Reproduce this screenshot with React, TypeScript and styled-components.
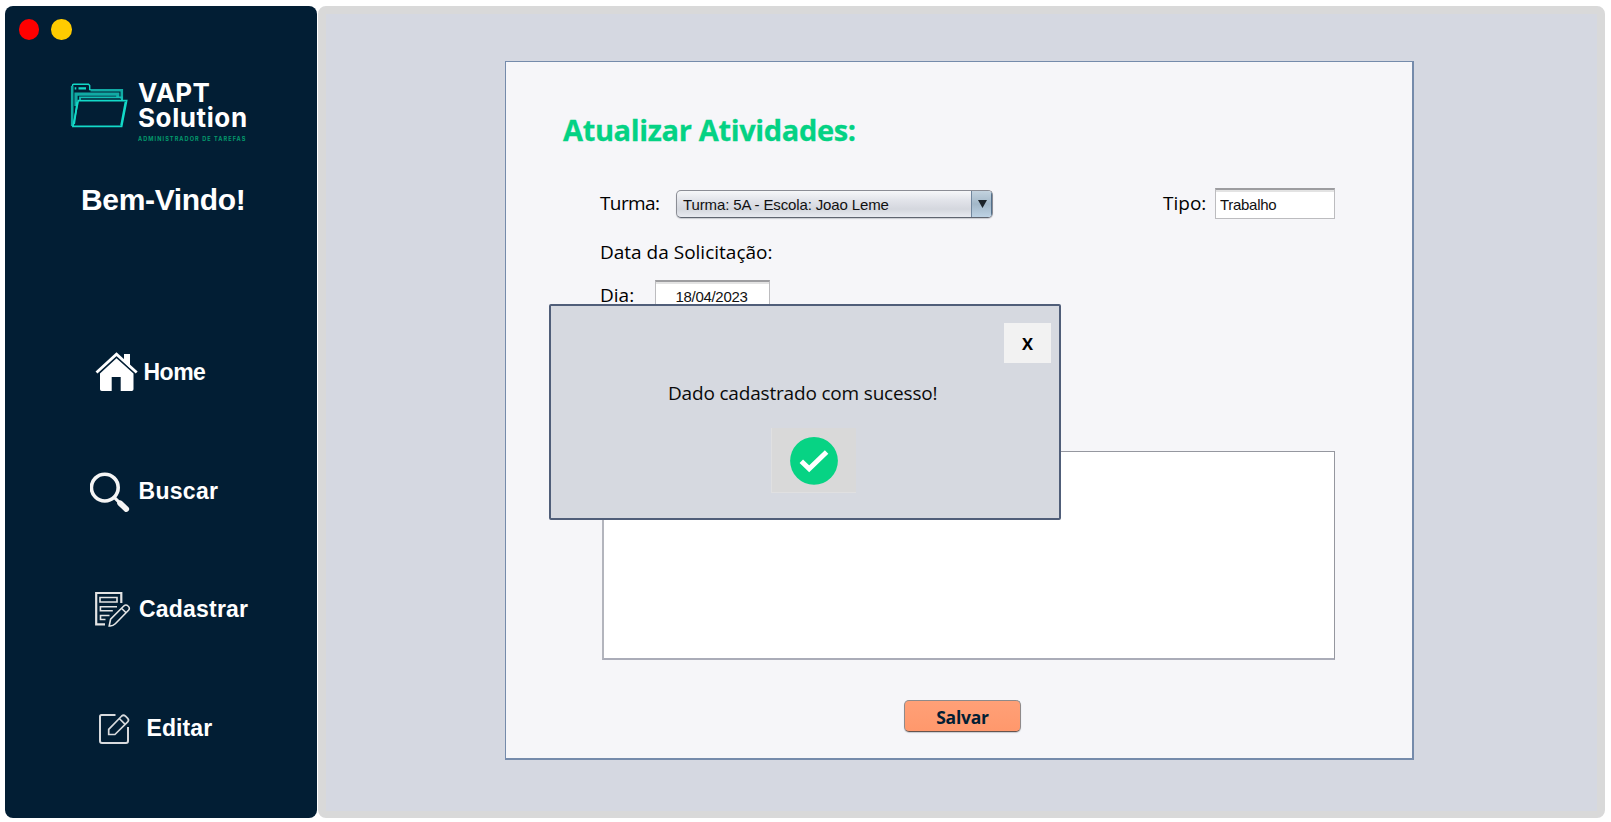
import React from "react";
import styled, { createGlobalStyle } from "styled-components";

const arial = `"Liberation Sans", Arial, sans-serif`;
const segoe = `"Open Sans", "Noto Sans", sans-serif`;

const GlobalStyle = createGlobalStyle`
  * { box-sizing: border-box; }
  body { margin: 0; background: #fff; }
  button, input, textarea { font: inherit; margin: 0; }
`;

const Window = styled.div`
  width: 1611px;
  height: 822px;
  padding: 6px 6px 4px 5px;
  display: flex;
  overflow: hidden;
`;

const Sidebar = styled.aside`
  width: 312px;
  height: 812px;
  flex: none;
  border-radius: 8px;
  background: #021e34;
  color: #fff;
  font-family: ${arial};
  font-weight: 700;
`;

const WindowControls = styled.div`
  display: flex;
  gap: 12px;
  padding: 13px 0 0 13.5px;
  height: 74px;
`;

const Dot = styled.span<{ $color: string }>`
  width: 20.5px;
  height: 20.5px;
  border-radius: 50%;
  background: ${(p) => p.$color};
`;

const Logo = styled.div`
  display: flex;
  height: 68px;
  padding-left: 65px;
`;

const LogoMark = styled.svg`
  width: 60px;
  height: 50px;
  flex: none;
`;

const LogoText = styled.div`
  padding: 1px 0 0 8px;
  font-family: Inter, ${arial};
  font-weight: 650;
  white-space: nowrap;
`;

const LogoName = styled.div<{ $spacing: number }>`
  font-size: 26px;
  line-height: 24.5px;
  letter-spacing: ${(p) => p.$spacing}px;
`;

const LogoTagline = styled.div`
  margin-top: 5px;
  font-size: 5.6px;
  line-height: 8px;
  letter-spacing: 1.05px;
  color: #049a6c;
`;

const Welcome = styled.h1`
  margin: 32px 0 132px 76px;
  font-size: 30px;
  line-height: 40px;
  font-weight: 700;
  letter-spacing: -0.33px;
  white-space: nowrap;
`;

const Nav = styled.nav`
  display: flex;
  flex-direction: column;
  gap: 78.6px;
  padding-left: 85px;
`;

const NavItem = styled.a<{ $spacing: number }>`
  display: flex;
  height: 40px;
  font-size: 23px;
  line-height: 40px;
  letter-spacing: ${(p) => p.$spacing}px;
`;

const NavIcon = styled.svg<{ $width: number }>`
  width: ${(p) => p.$width}px;
  height: 42px;
  flex: none;
`;

const Main = styled.main`
  flex: 1;
  height: 812px;
  margin-left: 1px;
  border: 8px solid #d9d9d9;
  border-bottom-width: 7px;
  border-radius: 8px;
  background: #d5d8e1;
  padding: 47px 0 0 179px;
`;

const Card = styled.section`
  width: 909px;
  height: 699px;
  position: relative;
  border: 1px solid #758bab;
  border-right-width: 2px;
  border-bottom-width: 2px;
  background: #f6f6f9;
  padding: 48px 77px 0 57px;
  font-family: ${segoe};
`;

const Title = styled.h2`
  margin: 0 0 38px;
  font-size: 29px;
  line-height: 40px;
  font-weight: 700;
  letter-spacing: -0.35px;
  color: #04d284;
  -webkit-text-stroke: 0.3px #04d284;
  white-space: nowrap;
`;

const Row = styled.div<{ $gap: number }>`
  display: flex;
  height: 31px;
  padding-left: 37px;
  margin-bottom: ${(p) => p.$gap}px;
`;

const Label = styled.label<{ $width: number; $spacing?: number }>`
  width: ${(p) => p.$width}px;
  flex: none;
  font-size: 19px;
  line-height: 30px;
  font-weight: 500;
  letter-spacing: ${(p) => p.$spacing ?? 0}px;
  color: #000;
  white-space: nowrap;
`;

const Select = styled.div`
  display: flex;
  width: 317px;
  height: 28px;
  margin: 2px 170px 0 0;
  flex: none;
  border: 1px solid #8b8d95;
  border-bottom-color: #5f6570;
  border-radius: 5px;
  box-shadow: 0 1px 1px #c9cbd0;
  overflow: hidden;
  background: linear-gradient(#f6f7f9 0%, #e2e4ea 35%, #d4d7de 70%, #e8eaf0 100%);
`;

const SelectValue = styled.span`
  flex: 1;
  padding-left: 6px;
  font: 15px/28px ${arial};
  letter-spacing: -0.13px;
  color: #111;
  white-space: nowrap;
`;

const SelectArrow = styled.span`
  display: flex;
  width: 21px;
  align-items: center;
  justify-content: center;
  border-left: 1px solid #71879e;
  background: linear-gradient(#c3d3df 0%, #a2b7c8 50%, #bdd2e4 100%);
  box-shadow: inset -1px 0 0 #53708b;
`;

const Field = styled.input<{ $width: number; $align?: string }>`
  width: ${(p) => p.$width}px;
  height: 31px;
  flex: none;
  border: 1px solid #bcbcbf;
  border-top: 2px solid #9d9da0;
  border-radius: 0;
  padding: 1px ${(p) => (p.$align ? 6 : 4)}px 0 4px;
  background: #fff;
  box-shadow: inset 0 2px 0 #e3e3e3;
  font: 15px ${arial};
  letter-spacing: -0.3px;
  text-align: ${(p) => p.$align ?? "left"};
  color: #111;
  outline: none;
`;

const Notes = styled.textarea`
  display: block;
  width: 733px;
  height: 209px;
  margin-left: 39px;
  border: 1px solid #95979f;
  border-left: 2px solid #b3b5bd;
  border-bottom: 2px solid #aaacb8;
  border-radius: 0;
  padding: 4px;
  resize: none;
  background: #fff;
  outline: none;
`;

const SaveButton = styled.button`
  display: block;
  width: 117px;
  height: 32px;
  margin: 40px 0 0 341px;
  padding: 2px 0 0;
  border: 1px solid #8f8a8a;
  border-bottom-color: #66544e;
  border-radius: 5px;
  box-shadow: 0 1px 1px #c9cbd0;
  background: linear-gradient(#ffa077, #ff986c);
  color: #021e34;
  font: 700 17.5px/28px ${segoe};
  letter-spacing: -0.25px;
`;

const Dialog = styled.div`
  position: absolute;
  left: 43px;
  top: 242px;
  width: 512px;
  height: 216px;
  border: 2px solid #505e79;
  border-radius: 2px;
  background: #d6d9e0;
  display: flex;
  flex-direction: column;
`;

const CloseButton = styled.button`
  align-self: flex-end;
  width: 47px;
  height: 40px;
  margin: 17px 8px 0 0;
  padding: 1px 0 0;
  border: 0;
  background: #f2f2f2;
  color: #000;
  font: 700 16.5px/38px ${segoe};
`;

const Message = styled.p`
  margin: 15px 0 0 117px;
  font-size: 19px;
  line-height: 30px;
  letter-spacing: -0.18px;
  color: #0a0a0a;
  white-space: nowrap;
`;

const Status = styled.div`
  width: 85px;
  height: 65px;
  margin: 20px 0 0 220px;
  border-left: 1px solid #e0e0e1;
  border-bottom: 1px solid #e0e0e1;
  background: #d9d9d9;
`;

const FolderLogo = () => (
  <LogoMark viewBox="70.5 80 60 50" fill="none" stroke="#13d9c8" strokeWidth="1.4">
    <path d="M73 126.3V85.5q0-1.2 1.2-1.2H89l1.2 1.2V89.6h32.3V100" />
    <path d="M72.6 126V86" strokeWidth="2.4" stroke="#10aaa3" />
    <path d="M75.2 88.3h1.6M79 88.3h7.5" strokeWidth="2.2" />
    <path d="M91 90.2h31.3V99" stroke="#11aaa4" strokeWidth="2.6" />
    <path d="M76.5 106V94.2h41.8V97" stroke="#11aaa4" strokeWidth="3.2" />
    <path d="M80.5 101v-3.7h42V101" strokeWidth="1.8" stroke="#12beb4" />
    <path d="M78.8 100.6h48.4l-5 25.8H73.4z" fill="#021e34" strokeWidth="1.6" />
    <path d="M126 102l-4.4 23.5M77.8 102 74.6 124" strokeWidth="1.8" />
  </LogoMark>
);

const HomeIcon = () => (
  <NavIcon $width={53.5} viewBox="90 352 53.5 42">
    <path fill="#fff" d="M124 354h6v14l-6-6z" />
    <path d="M96.5 372.5 116.5 354.2 136.7 372.5" fill="none" stroke="#fff" strokeWidth="2.8" />
    <path fill="#fff" d="M116.5 358.2 133.5 373.5v15.7q0 1.8-1.8 1.8h-11V377h-9v14h-9.9q-1.8 0-1.8-1.8v-15.7z" />
  </NavIcon>
);

const SearchIcon = () => (
  <NavIcon $width={48.5} viewBox="90 470.4 48.5 42" fill="none" stroke="#f5f5f5" strokeLinecap="round">
    <circle cx="104.8" cy="487" r="13.4" strokeWidth="3.6" />
    <path d="M114.5 497l4.5 4.5" strokeWidth="3" />
    <path d="M120 502.5l6.3 6" strokeWidth="5.6" />
  </NavIcon>
);

const FormIcon = () => (
  <NavIcon $width={49} viewBox="90 589 49 42" fill="none" stroke="#e4e4e4" strokeWidth="1.6">
    <path d="M105 624.3h-8.8V593H121.3V603" strokeWidth="2.2" />
    <path d="M100 597.5h17v4.5h-17zM117 606.8h-16.6v4h12.4M109.5 615.5h-9v4h5" />
    <path d="M109.2 626l1.4-6.8 13.4-13.4q2-1.7 4 .2 2.4 2 .5 4.2l-13.2 13.6q-2.5 2.6-6.1 2.2zM121.5 608.2l4.6 4.5" />
  </NavIcon>
);

const EditIcon = () => (
  <NavIcon $width={56.5} viewBox="90 708 56.5 42" fill="none" stroke="#d8dadd" strokeWidth="2">
    <path d="M115.5 715H101.5q-1.5 0-1.5 1.5V741q0 2 2 2h24q2 0 2-2v-14" />
    <path d="M108.7 734.5v-5.2l13-13.3q1.8-1.6 3.8.2l2.2 2.2q1.6 1.8 0 3.4l-12.8 12.7zM119.3 718.5l5.6 5.6" strokeWidth="1.7" />
  </NavIcon>
);

const CheckIcon = () => (
  <svg width="84" height="64" viewBox="0 0 84 64">
    <circle cx="42" cy="32.8" r="23.9" fill="#07d384" />
    <path d="M29.3 33.2 37.2 40.8 54.6 24" fill="none" stroke="#fff" strokeWidth="5" />
  </svg>
);

export default function App() {
  return (
    <>
      <GlobalStyle />
      <Window>
        <Sidebar>
          <WindowControls>
            <Dot $color="#ff0000" />
            <Dot $color="#ffcb00" />
          </WindowControls>
          <Logo>
            <FolderLogo />
            <LogoText>
              <LogoName $spacing={0.3}>VAPT</LogoName>
              <LogoName $spacing={0.6}>Solution</LogoName>
              <LogoTagline>ADMINISTRADOR DE TAREFAS</LogoTagline>
            </LogoText>
          </Logo>
          <Welcome>Bem-Vindo!</Welcome>
          <Nav>
            <NavItem $spacing={-0.5}><HomeIcon />Home</NavItem>
            <NavItem $spacing={0.3}><SearchIcon />Buscar</NavItem>
            <NavItem $spacing={0.2}><FormIcon />Cadastrar</NavItem>
            <NavItem $spacing={0.1}><EditIcon />Editar</NavItem>
          </Nav>
        </Sidebar>
        <Main>
          <Card>
            <Title>Atualizar Atividades:</Title>
            <Row $gap={18}>
              <Label $width={76} $spacing={-0.6}>Turma:</Label>
              <Select>
                <SelectValue>Turma: 5A - Escola: Joao Leme</SelectValue>
                <SelectArrow>
                  <svg width="9" height="8" viewBox="0 0 9 8"><path d="M0 0h9L4.5 8z" fill="#1c2329" /></svg>
                </SelectArrow>
              </Select>
              <Label $width={52}>Tipo:</Label>
              <Field $width={120} defaultValue="Trabalho" />
            </Row>
            <Row $gap={12}>
              <Label $width={200}>Data da Solicitação:</Label>
            </Row>
            <Row $gap={140}>
              <Label $width={55}>Dia:</Label>
              <Field $width={115} $align="center" defaultValue="18/04/2023" />
            </Row>
            <Notes />
            <SaveButton>Salvar</SaveButton>
            <Dialog role="dialog">
              <CloseButton>X</CloseButton>
              <Message>Dado cadastrado com sucesso!</Message>
              <Status><CheckIcon /></Status>
            </Dialog>
          </Card>
        </Main>
      </Window>
    </>
  );
}
